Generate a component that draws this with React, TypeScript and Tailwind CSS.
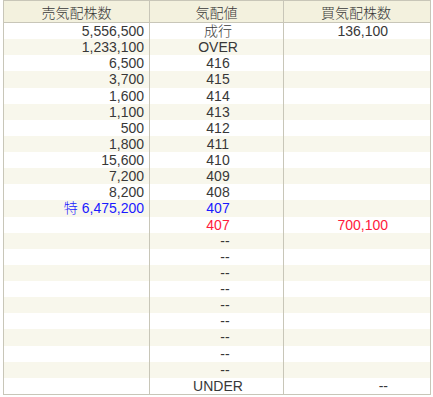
import React from "react";

type Row = { sell: React.ReactNode; price: React.ReactNode; buy: React.ReactNode; priceClass?: string; buyClass?: string; sellClass?: string; dash?: boolean };

const D = "--";

const rows: Row[] = [
  { sell: "5,556,500", price: <span className="font-light">成行</span>, buy: "136,100" },
  { sell: "1,233,100", price: "OVER", buy: "" },
  { sell: "6,500", price: "416", buy: "" },
  { sell: "3,700", price: "415", buy: "" },
  { sell: "1,600", price: "414", buy: "" },
  { sell: "1,100", price: "413", buy: "" },
  { sell: "500", price: "412", buy: "" },
  { sell: "1,800", price: "411", buy: "" },
  { sell: "15,600", price: "410", buy: "" },
  { sell: "7,200", price: "409", buy: "" },
  { sell: "8,200", price: "408", buy: "" },
  { sell: <span><span className="font-light">特</span>{" 6,475,200"}</span>, price: "407", buy: "", sellClass: "text-[#1a1aff]", priceClass: "text-[#1a1aff]" },
  { sell: "", price: "407", buy: "700,100", priceClass: "text-[#ff1a3c]", buyClass: "text-[#ff1a3c]" },
  ...Array.from({ length: 9 }, () => ({ sell: "", price: D, buy: "", dash: true })),
  { sell: "", price: "UNDER", buy: D },
];

export default function App() {
  return (
    <div className="w-[433px] h-[397px] bg-white" style={{ fontFamily: '"Liberation Sans", Arial, "Noto Sans CJK JP", sans-serif' }}>
      <div className="ml-[3px] w-[428px] border border-[#c8c6b8] text-[14px] leading-none text-[#383838]">
        <div className="flex h-[22px] bg-[#f3f1de] border-b border-[#c8c6b8] font-light">
          <div className="w-[145px] flex items-center justify-center pt-[2px]">売気配株数</div>
          <div className="w-[134px] border-l border-[#c8c6b8] flex items-center justify-center pt-[2px]">気配値</div>
          <div className="w-[145px] border-l border-[#c8c6b8] flex items-center justify-center pt-[2px]">買気配株数</div>
        </div>
        {rows.map((r, i) => (
          <div key={i} className={`flex h-[16.13px] ${i % 2 === 1 ? "bg-[#f8f7ec]" : "bg-white"}`}>
            <div className={`w-[145px] flex items-center justify-end pr-[5px] whitespace-pre ${r.sellClass ?? ""}`}>{r.sell}</div>
            <div className={`w-[134px] border-l border-[#c8c6b8] flex items-center justify-center ${r.dash ? "pl-[17px]" : "pl-[3px]"} ${r.priceClass ?? ""}`}>{r.price}</div>
            <div className={`w-[145px] border-l border-[#c8c6b8] flex items-center justify-end pr-[40px] ${r.buyClass ?? ""}`}>{r.buy}</div>
          </div>
        ))}
      </div>
    </div>
  );
}
